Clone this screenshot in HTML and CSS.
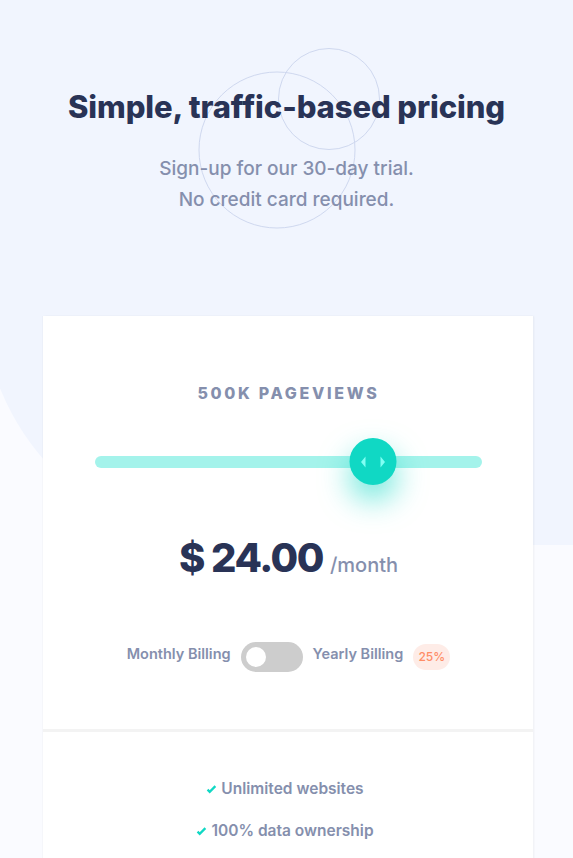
FILE: index.html
```html
<!DOCTYPE html>
<html lang="en">
<head>
    <meta charset="UTF-8">
    <meta name="viewport" content="width=device-width, initial-scale=1.0">
    <title>Interactive pricing component</title>
    <link rel="stylesheet" href="styles.css">
</head>
<body>
    <div class="bg-shape"></div>

    <!-- header -->
    <header class="header">
        <svg class="circles" width="185" height="183" viewBox="0 0 185 183">
            <g fill="none" stroke="#cfd8ef" stroke-width="1">
                <circle cx="80" cy="103" r="78"/>
                <circle cx="132" cy="52" r="50.5"/>
            </g>
        </svg>
        <h1>Simple, traffic-based pricing</h1>
        <p>Sign-up for our 30-day trial.<br>No credit card required.</p>
    </header>

    <!-- pricing card -->
    <main class="card">
        <section class="card-top">
            <h2 class="pageviews">500K Pageviews</h2>
            <div class="slider">
                <div class="track"></div>
                <div class="thumb" style="left: 71.8%;">
                    <svg width="25" height="12" viewBox="0 0 25 12">
                        <path d="M5 0.5v11L0.5 6z M20 0.5v11L24.5 6z" fill="#80fff3"/>
                    </svg>
                </div>
            </div>
            <div class="price">
                <span class="amount">$ 24.00</span>
                <span class="period">/month</span>
            </div>
            <div class="billing">
                <span class="billing-label">Monthly Billing</span>
                <div class="toggle"><span class="knob"></span></div>
                <span class="billing-label">Yearly Billing</span>
                <span class="discount">25%</span>
            </div>
        </section>

        <section class="card-bottom">
            <ul class="features">
                <li><svg width="11" height="9" viewBox="0 0 9 8"><path fill="none" stroke="#10d8c4" stroke-width="2" d="M1 4.134l1.907 1.908L7.949 1"/></svg>Unlimited websites</li>
                <li><svg width="11" height="9" viewBox="0 0 9 8"><path fill="none" stroke="#10d8c4" stroke-width="2" d="M1 4.134l1.907 1.908L7.949 1"/></svg>100% data ownership</li>
                <li><svg width="11" height="9" viewBox="0 0 9 8"><path fill="none" stroke="#10d8c4" stroke-width="2" d="M1 4.134l1.907 1.908L7.949 1"/></svg>Email reports</li>
            </ul>
            <button class="btn-trial">Start my trial</button>
        </section>
    </main>
</body>
</html>
```

FILE: styles.css
```css
* {
    margin: 0;
    padding: 0;
    box-sizing: border-box;
}

body {
    font-family: Inter, "Noto Sans", sans-serif;
    background-color: #fafbff;
    color: #858fad;
    position: relative;
    overflow-x: hidden;
}

.bg-shape {
    position: absolute;
    top: 0;
    left: -18px;
    right: 0;
    height: 545px;
    background: #f1f5fe;
    border-bottom-left-radius: 250px;
    z-index: 0;
}

.header {
    position: relative;
    z-index: 1;
    text-align: center;
    padding-top: 87px;
}

.circles {
    position: absolute;
    top: 47px;
    left: 50%;
    margin-left: -90px;
}

.header h1 {
    position: relative;
    font-size: 31px;
    line-height: 40px;
    font-weight: 800;
    letter-spacing: -0.1px;
    color: #293356;
}

.header p {
    position: relative;
    margin-top: 26px;
    font-size: 19px;
    line-height: 31px;
    font-weight: 500;
}

.card {
    position: relative;
    z-index: 1;
    display: block;
    width: 490px;
    margin: 101px 40px 0 43px;
    background: white;
    box-shadow: 1px 0 2px rgba(0,0,0,0.05), -1px 0 1px rgba(0,0,0,0.02);
}

.card-top {
    padding: 67px 51px 57px 52px;
    text-align: center;
    border-bottom: 3px solid #f3f3f3;
}

.pageviews {
    font-size: 16px;
    line-height: 20px;
    font-weight: 800;
    letter-spacing: 2.7px;
    text-transform: uppercase;
}

.slider {
    position: relative;
    height: 47px;
    margin-top: 35px;
    display: flex;
    align-items: center;
}

.track {
    width: 100%;
    height: 12px;
    border-radius: 6px;
    background: #a4f3eb;
}

.thumb {
    position: absolute;
    top: 0;
    width: 47px;
    height: 47px;
    border-radius: 50%;
    background: #10d8c4;
    transform: translateX(-50%);
    display: flex;
    align-items: center;
    justify-content: center;
    box-shadow: 0 15px 30px rgba(16,216,196,0.6);
}

.price {
    display: flex;
    justify-content: center;
    align-items: baseline;
    gap: 7px;
    margin-top: 49px;
}

.amount {
    font-size: 40px;
    line-height: 48px;
    font-weight: 800;
    letter-spacing: -1.5px;
    color: #293356;
}

.period {
    font-size: 20px;
    font-weight: 500;
}

.billing {
    display: flex;
    justify-content: center;
    align-items: center;
    gap: 10px;
    height: 30px;
    margin-top: 60px;
    font-size: 14.5px;
    font-weight: 600;
}

.billing-label {
    margin-bottom: 7px;
}

.toggle {
    width: 62px;
    height: 30px;
    border-radius: 15px;
    background: #cdcdcd;
    display: flex;
    align-items: center;
    padding: 0 5px;
}

.knob {
    width: 20px;
    height: 20px;
    border-radius: 50%;
    background: white;
}

.discount {
    width: 37px;
    height: 26px;
    margin-bottom: 1px;
    border-radius: 13px;
    background: #feece7;
    color: #ff8c66;
    font-size: 12px;
    font-weight: 500;
    display: flex;
    align-items: center;
    justify-content: center;
}

.features {
    list-style: none;
    padding: 46px 6px 30px 0;
    text-align: center;
}

.features li {
    font-size: 15.5px;
    line-height: 22px;
    font-weight: 600;
}

.features li + li {
    margin-top: 20px;
}

.features svg {
    margin-right: 4px;
}

.btn-trial {
    display: block;
    margin: 0 auto 40px;
    padding: 13px 45px;
    border: none;
    border-radius: 25px;
    background: #293356;
    color: #bdccff;
    font-family: inherit;
    font-size: 12px;
    font-weight: 800;
}
```
